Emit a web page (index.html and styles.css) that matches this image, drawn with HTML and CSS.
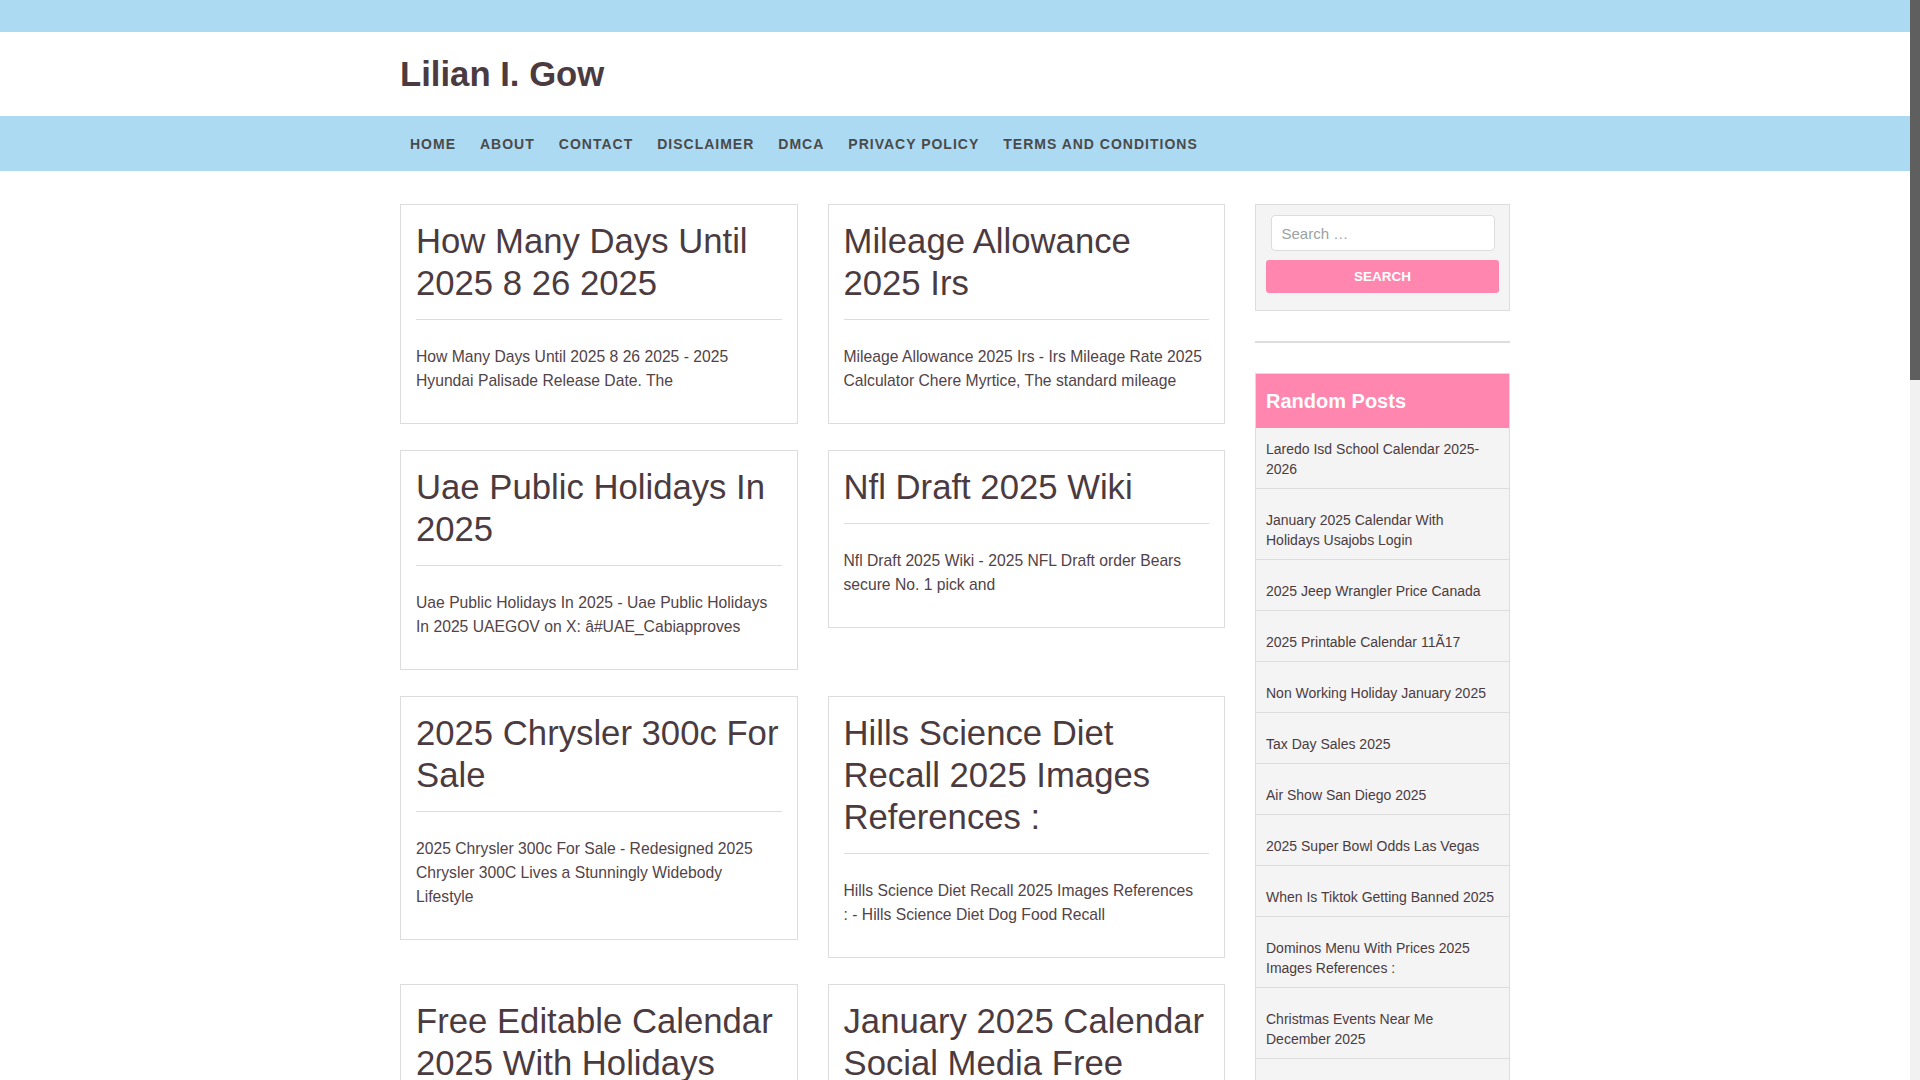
FILE: index.html
```html
<!DOCTYPE html>
<html lang="en">
<head>
<meta charset="utf-8">
<title>Lilian I. Gow</title>
<link rel="stylesheet" href="styles.css">
</head>
<body>
<div class="fake-scrollbar" aria-hidden="true"><div class="fake-thumb"></div></div>
<div class="page">
<div class="topbar"></div>
<header class="site-header">
  <div class="container">
    <h1 class="site-title">Lilian I. Gow</h1>
  </div>
</header>
<nav class="main-nav">
  <div class="container">
    <ul class="menu">
      <li><a href="#">Home</a></li>
      <li><a href="#">About</a></li>
      <li><a href="#">Contact</a></li>
      <li><a href="#">Disclaimer</a></li>
      <li><a href="#">DMCA</a></li>
      <li><a href="#">Privacy Policy</a></li>
      <li><a href="#">Terms and Conditions</a></li>
    </ul>
  </div>
</nav>
<div class="container content">
  <main class="posts">
    <article class="card">
      <header class="entry-header"><h2 class="entry-title">How Many Days Until 2025 8 26 2025</h2></header>
      <p class="entry-summary">How Many Days Until 2025 8 26 2025 - 2025 Hyundai Palisade Release Date. The</p>
    </article>
    <article class="card">
      <header class="entry-header"><h2 class="entry-title">Mileage Allowance 2025 Irs</h2></header>
      <p class="entry-summary">Mileage Allowance 2025 Irs - Irs Mileage Rate 2025 Calculator Chere Myrtice, The standard mileage</p>
    </article>
    <article class="card">
      <header class="entry-header"><h2 class="entry-title">Uae Public Holidays In 2025</h2></header>
      <p class="entry-summary">Uae Public Holidays In 2025 - Uae Public Holidays In 2025 UAEGOV on X: â#UAE_Cabiapproves</p>
    </article>
    <article class="card">
      <header class="entry-header"><h2 class="entry-title">Nfl Draft 2025 Wiki</h2></header>
      <p class="entry-summary">Nfl Draft 2025 Wiki - 2025 NFL Draft order Bears secure No. 1 pick and</p>
    </article>
    <article class="card">
      <header class="entry-header"><h2 class="entry-title">2025 Chrysler 300c For Sale</h2></header>
      <p class="entry-summary">2025 Chrysler 300c For Sale - Redesigned 2025 Chrysler 300C Lives a Stunningly Widebody Lifestyle</p>
    </article>
    <article class="card">
      <header class="entry-header"><h2 class="entry-title">Hills Science Diet Recall 2025 Images References :</h2></header>
      <p class="entry-summary">Hills Science Diet Recall 2025 Images References<br>: - Hills Science Diet Dog Food Recall</p>
    </article>
    <article class="card">
      <header class="entry-header"><h2 class="entry-title">Free Editable Calendar 2025 With Holidays</h2></header>
      <p class="entry-summary">Free Editable Calendar 2025 With Holidays - 2025 Calendar With Holidays Printable Free Word</p>
    </article>
    <article class="card">
      <header class="entry-header"><h2 class="entry-title">January 2025 Calendar Social Media Free</h2></header>
      <p class="entry-summary">January 2025 Calendar Social Media Free - January 2025 Social Media Calendar Template</p>
    </article>
    <article class="card">
      <header class="entry-header"><h2 class="entry-title">Best Family Cars 2025 Uk</h2></header>
      <p class="entry-summary">Best Family Cars 2025 Uk - The Best Family Cars To Buy In 2025</p>
    </article>
    <article class="card">
      <header class="entry-header"><h2 class="entry-title">Honda Pilot 2025 Redesign</h2></header>
      <p class="entry-summary">Honda Pilot 2025 Redesign - 2025 Honda Pilot Release Date, Price And Specs</p>
    </article>
    <article class="card">
      <header class="entry-header"><h2 class="entry-title">Ramadan 2025 Start Date Usa</h2></header>
      <p class="entry-summary">Ramadan 2025 Start Date Usa - When Does Ramadan 2025 Start And End</p>
    </article>
    <article class="card">
      <header class="entry-header"><h2 class="entry-title">Easter Sunday 2025 Date</h2></header>
      <p class="entry-summary">Easter Sunday 2025 Date - When Is Easter 2025 And Why Does The Date Change</p>
    </article>
    <article class="card">
      <header class="entry-header"><h2 class="entry-title">2025 Toyota Camry Hybrid Mpg</h2></header>
      <p class="entry-summary">2025 Toyota Camry Hybrid Mpg - 2025 Toyota Camry Hybrid Review, Pricing And Specs</p>
    </article>
    <article class="card">
      <header class="entry-header"><h2 class="entry-title">Memorial Day 2025 Weekend</h2></header>
      <p class="entry-summary">Memorial Day 2025 Weekend - Memorial Day Weekend 2025 Events And Sales</p>
    </article>
  </main>
  <aside class="sidebar">
    <section class="widget widget-search">
      <form class="search-form">
        <input class="search-field" type="search" placeholder="Search …">
        <input class="search-submit" type="submit" value="Search">
      </form>
    </section>
    <div class="widget-sep"></div>
    <section class="widget widget-random">
      <h3 class="widget-title">Random Posts</h3>
      <ul class="post-list">
        <li><a href="#">Laredo Isd School Calendar 2025-2026</a></li>
        <li><a href="#">January 2025 Calendar With Holidays Usajobs Login</a></li>
        <li><a href="#">2025 Jeep Wrangler Price Canada</a></li>
        <li><a href="#">2025 Printable Calendar 11Ã17</a></li>
        <li><a href="#">Non Working Holiday January 2025</a></li>
        <li><a href="#">Tax Day Sales 2025</a></li>
        <li><a href="#">Air Show San Diego 2025</a></li>
        <li><a href="#">2025 Super Bowl Odds Las Vegas</a></li>
        <li><a href="#">When Is Tiktok Getting Banned 2025</a></li>
        <li><a href="#">Dominos Menu With Prices 2025 Images References :</a></li>
        <li><a href="#">Christmas Events Near Me December 2025</a></li>
        <li><a href="#">Best Family Cars 2025 Uk</a></li>
        <li><a href="#">Honda Pilot 2025 Redesign</a></li>
        <li><a href="#">Ramadan 2025 Start Date Usa</a></li>
      </ul>
    </section>
  </aside>
</div>
<footer class="site-footer">
  <div class="container">
    <p class="copyright">Copyright © 2025 Lilian I. Gow</p>
  </div>
</footer>
</div>
</body>
</html>
```

FILE: styles.css
```css
html {
  scrollbar-width: none;
}
::-webkit-scrollbar {
  width: 0;
  height: 0;
}
* {
  box-sizing: border-box;
}
body {
  margin: 0;
  font-family: "Liberation Sans", Arial, sans-serif;
  color: #4b3b40;
  background: #ffffff;
}
.page {
  margin-right: 10px;
}
.fake-scrollbar {
  position: fixed;
  top: 0;
  right: 0;
  width: 10px;
  height: 100vh;
  background: #f1f1f1;
  z-index: 10;
}
.fake-thumb {
  width: 10px;
  height: 380px;
  background: #5f5f5f;
}
a {
  color: inherit;
  text-decoration: none;
}
.container {
  width: 1140px;
  margin: 0 auto;
  padding: 0 15px;
}
.topbar {
  height: 32px;
  background: #addaf3;
}
.site-header {
  background: #ffffff;
  padding: 21px 0;
}
.site-title {
  margin: 0;
  font-size: 34.7px;
  line-height: 42px;
  font-weight: 700;
  color: #4b3b40;
}
.main-nav {
  background: #addaf3;
}
.menu {
  list-style: none;
  margin: 0 0 0 -2px;
  padding: 0;
  display: flex;
}
.menu a {
  display: block;
  padding: 2px 12px 0;
  line-height: 53px;
  font-size: 14px;
  font-weight: 700;
  letter-spacing: 1px;
  text-transform: uppercase;
  color: #4a4a4a;
}
.content {
  display: grid;
  grid-template-columns: 825px 255px;
  column-gap: 30px;
  padding-top: 33px;
  align-items: start;
}
.posts {
  display: grid;
  grid-template-columns: 1fr 1fr;
  column-gap: 30px;
  row-gap: 26px;
  align-items: start;
}
.card {
  border: 1px solid #dddddd;
  background: #ffffff;
  padding: 15px;
}
.entry-header {
  padding-bottom: 15px;
  border-bottom: 1px solid #dddddd;
}
.entry-title {
  margin: 0;
  font-size: 34.7px;
  line-height: 42px;
  font-weight: 400;
  color: #4b3b40;
}
.entry-summary {
  margin: 25px 0 15px;
  font-size: 15.7px;
  line-height: 24px;
  color: #524347;
}
.widget-search {
  background: #f4f4f4;
  border: 1px solid #dddddd;
  padding: 10px 10px 17px;
}
.search-form {
  display: flex;
  flex-direction: column;
}
.search-field {
  margin: 0 4.5px;
  height: 36px;
  padding: 0 10px;
  border: 1px solid #dddddd;
  border-radius: 4px;
  background: #ffffff;
  font-family: "Liberation Sans", Arial, sans-serif;
  font-size: 15px;
  color: #4b3b40;
  outline: none;
}
.search-field::placeholder {
  color: #9aa2a2;
}
.search-submit {
  margin-top: 8.5px;
  height: 33px;
  border: 0;
  border-radius: 3px;
  background: #ff86ae;
  color: #ffffff;
  font-family: "Liberation Sans", Arial, sans-serif;
  font-size: 13.5px;
  font-weight: 700;
  text-transform: uppercase;
}
.widget-sep {
  margin: 30px 0;
  border-top: 2px solid #dddddd;
}
.widget-random {
  border: 1px solid #dddddd;
  background: #f4f4f4;
}
.widget-title {
  margin: 0;
  padding: 15px 10px;
  background: #ff86ae;
  color: #ffffff;
  font-size: 20px;
  line-height: 24px;
  font-weight: 700;
}
.post-list {
  list-style: none;
  margin: 0;
  padding: 0;
}
.post-list li {
  padding: 11px 10px 9px;
  border-bottom: 1px solid #dddddd;
  font-size: 14px;
  line-height: 20px;
}
.post-list li + li {
  margin-top: 10px;
}
.site-footer {
  margin-top: 40px;
  background: #addaf3;
}
.copyright {
  margin: 0;
  padding: 20px 0;
  font-size: 14px;
  color: #4b3b40;
}
```
